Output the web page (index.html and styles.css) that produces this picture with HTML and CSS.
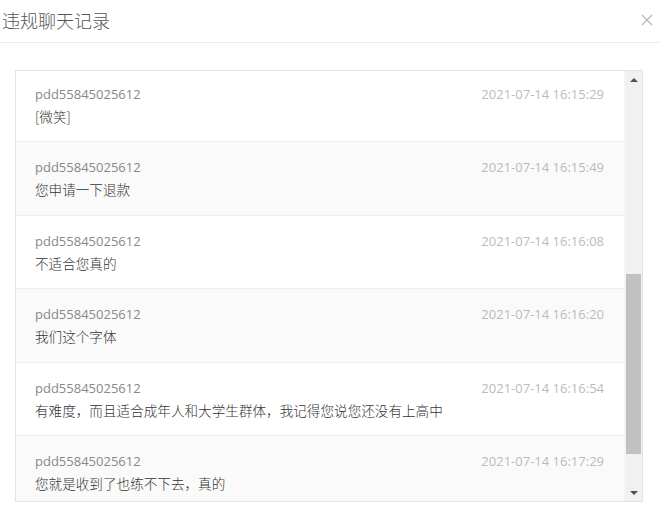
FILE: index.html
```html
<!DOCTYPE html>
<html lang="zh-CN">

<head>
    <meta charset="UTF-8">
    <title>违规聊天记录</title>
    <link rel="stylesheet" href="styles.css">
</head>

<body>
    <div class="dialog">
        <div class="dialog-header">
            <span class="dialog-title">违规聊天记录</span>
            <a href="javascript:;" class="dialog-close">
                <svg width="12" height="12" viewBox="0 0 12 12">
                    <path d="M1 1L11 11M11 1L1 11" stroke="#b4b4b4" stroke-width="1.1" fill="none"/>
                </svg>
            </a>
        </div>
        <div class="dialog-body">
            <div class="chat-box">
                <div class="chat-list">
                    <div class="chat-item">
                        <div class="chat-line">
                            <span class="chat-name">pdd55845025612</span>
                            <span class="chat-time">2021-07-14 16:15:29</span>
                        </div>
                        <div class="chat-msg">[微笑]</div>
                    </div>
                    <div class="chat-item">
                        <div class="chat-line">
                            <span class="chat-name">pdd55845025612</span>
                            <span class="chat-time">2021-07-14 16:15:49</span>
                        </div>
                        <div class="chat-msg">您申请一下退款</div>
                    </div>
                    <div class="chat-item">
                        <div class="chat-line">
                            <span class="chat-name">pdd55845025612</span>
                            <span class="chat-time">2021-07-14 16:16:08</span>
                        </div>
                        <div class="chat-msg">不适合您真的</div>
                    </div>
                    <div class="chat-item">
                        <div class="chat-line">
                            <span class="chat-name">pdd55845025612</span>
                            <span class="chat-time">2021-07-14 16:16:20</span>
                        </div>
                        <div class="chat-msg">我们这个字体</div>
                    </div>
                    <div class="chat-item">
                        <div class="chat-line">
                            <span class="chat-name">pdd55845025612</span>
                            <span class="chat-time">2021-07-14 16:16:54</span>
                        </div>
                        <div class="chat-msg">有难度，而且适合成年人和大学生群体，我记得您说您还没有上高中</div>
                    </div>
                    <div class="chat-item">
                        <div class="chat-line">
                            <span class="chat-name">pdd55845025612</span>
                            <span class="chat-time">2021-07-14 16:17:29</span>
                        </div>
                        <div class="chat-msg">您就是收到了也练不下去，真的</div>
                    </div>
                </div>
                <!-- 滚动条 -->
                <div class="scrollbar">
                    <span class="scroll-btn up"></span>
                    <div class="scroll-track">
                        <div class="scroll-thumb"></div>
                    </div>
                    <span class="scroll-btn down"></span>
                </div>
            </div>
        </div>
    </div>
</body>

</html>
```

FILE: styles.css
```css
* {
    margin: 0;
    padding: 0;
    text-decoration: none;
    box-sizing: border-box;
}

body {
    width: 660px;
    height: 517px;
    overflow: hidden;
    background-color: #fff;
    font-family: "Open Sans", "Noto Sans CJK SC", sans-serif;
}

.dialog-header {
    height: 43px;
    display: flex;
    align-items: center;
    justify-content: space-between;
    padding: 0 7px 3px 2px;
    border-bottom: 1px solid #ececec;
}

.dialog-title {
    font-family: "Noto Sans CJK SC", sans-serif;
    font-size: 18px;
    color: #555;
    font-weight: 300;
}

.dialog-close {
    display: flex;
    width: 12px;
    height: 12px;
}

.dialog-body {
    padding: 27px 17px 0 15px;
}

.chat-box {
    display: flex;
    height: 432px;
    border: 1px solid #e3e3e3;
}

.chat-list {
    flex: 1;
    overflow: hidden;
}

/* 列表已滚动一点 */
.chat-item:first-child {
    margin-top: -2px;
}

.chat-item {
    height: 73.4px;
    padding: 14px 20px 0 19px;
    border-bottom: 1px solid #eeeeee;
    background-color: #fff;
}

.chat-item:nth-child(even) {
    background-color: #fafafa;
}

.chat-line {
    display: flex;
    justify-content: space-between;
    line-height: 22px;
}

.chat-name {
    font-size: 13px;
    color: #888;
}

.chat-time {
    font-size: 13px;
    color: #bbb;
}

.chat-msg {
    font-family: "Noto Sans CJK SC", sans-serif;
    font-size: 13.6px;
    font-weight: 300;
    line-height: 22px;
    color: #333;
}

.scrollbar {
    width: 18px;
    display: flex;
    flex-direction: column;
    background-color: #f1f1f1;
    border-left: 1px solid #f6f6f6;
}

.scroll-btn {
    height: 17px;
    display: flex;
    align-items: center;
    justify-content: center;
}

.scroll-btn::after {
    content: "";
    border-left: 4px solid transparent;
    border-right: 4px solid transparent;
}

.scroll-btn.up::after {
    border-bottom: 4px solid #505050;
}

.scroll-btn.down::after {
    border-top: 4px solid #505050;
}

.scroll-track {
    flex: 1;
    padding: 186px 1px 0 1px;
}

.scroll-thumb {
    height: 180px;
    background-color: #c1c1c1;
}
```
